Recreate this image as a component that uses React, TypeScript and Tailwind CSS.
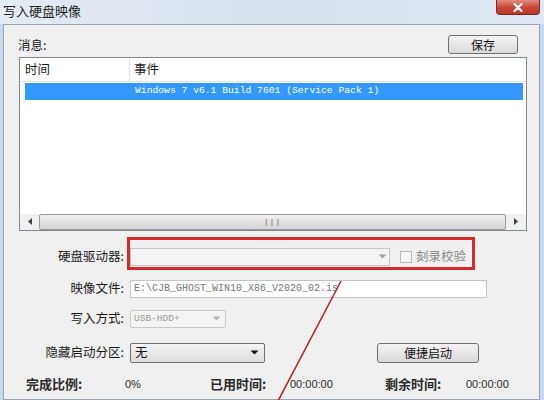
import React from "react";

const cjk = { fontFamily: '"Noto Sans CJK SC", "Liberation Sans", sans-serif' };
const mono = { fontFamily: '"Liberation Mono", "Noto Sans CJK SC", monospace' };
const sans = { fontFamily: '"Liberation Sans", sans-serif' };

function Caret({ color = "#a0a0a0" }: { color?: string }) {
  return (
    <svg width="9" height="5" viewBox="0 0 9 5">
      <path d="M0.5 0.5 L8.5 0.5 L4.5 4.5 Z" fill={color} />
    </svg>
  );
}

function Label({ text }: { text: string }) {
  return <div className="w-[121px] shrink-0 text-right pr-[1px] text-[12.5px] text-[#1a1a1a]">{text}</div>;
}

export default function App() {
  return (
    <div className="relative w-[544px] h-[400px] overflow-hidden bg-[#c6d9ee]" style={cjk}>
      {/* title bar */}
      <div className="flex items-start justify-between h-[24px] bg-gradient-to-r from-[#e4ecf5] via-[#d6e1ee] to-[#dde8f4]">
        <span className="pl-[3px] pt-[1px] text-[13px] text-[#222] leading-[20px]">写入硬盘映像</span>
        <div className="mr-[4px] w-[44px] h-[15px] rounded-b-[4px] border border-t-0 border-[#7a2a22] bg-gradient-to-b from-[#e08a7e] via-[#c9483a] to-[#b8382b] flex items-center justify-center">
          <svg width="10" height="9" viewBox="0 0 10 9">
            <path d="M1.5 1 L8.5 8 M8.5 1 L1.5 8" stroke="#fff" strokeWidth="2.2" strokeLinecap="round" />
          </svg>
        </div>
      </div>

      {/* client area */}
      <div className="ml-[3px] mr-[4px] h-[376px] border border-[#98a4b2] bg-[#f0f0f0]">
        <div className="flex items-center justify-between pt-[10px] pl-[14px] pr-[21px]">
          <span className="text-[12.5px] text-[#1a1a1a] pt-[1px]">消息:</span>
          <button className="w-[70px] h-[19px] rounded-[3px] border border-[#707070] bg-gradient-to-b from-[#f4f4f4] to-[#dadada] text-[12px] text-[#111] leading-none">
            保存
          </button>
        </div>

        {/* list */}
        <div className="ml-[15px] mt-[2px] w-[508px] h-[174px] border border-[#828790] bg-white flex flex-col">
          <div className="flex h-[24px] border-b border-[#e5e5e5] text-[12.5px] text-[#1a1a1a]">
            <div className="w-[110px] border-r border-[#e5e5e5] pl-[5px] flex items-center">时间</div>
            <div className="pl-[4px] flex items-center">事件</div>
          </div>
          <div className="ml-[5px] mr-[3px] mt-[1px] h-[17px] bg-[#3399ff] flex items-center pl-[110px] text-white text-[9.7px]" style={mono}>
            Windows 7 v6.1 Build 7601 (Service Pack 1)
          </div>
          <div className="flex-1" />
          <div className="flex h-[16px] bg-[#f0f0f0] items-stretch">
            <div className="w-[19px] flex items-center justify-center">
              <svg width="4" height="7" viewBox="0 0 4 7"><path d="M4 0 L0 3.5 L4 7 Z" fill="#404040" /></svg>
            </div>
            <div className="flex-1 rounded-[2px] border border-[#9a9a9a] bg-gradient-to-b from-[#f2f2f2] to-[#d4d4d4] flex items-center justify-center">
              <span className="text-[8px] text-[#555] tracking-[1px]" style={mono}>|||</span>
            </div>
            <div className="w-[20px] flex items-center justify-center">
              <svg width="4" height="7" viewBox="0 0 4 7"><path d="M0 0 L4 3.5 L0 7 Z" fill="#404040" /></svg>
            </div>
          </div>
        </div>

        {/* form */}
        <div className="mt-[17px] flex flex-col">
          <div className="flex items-center h-[18px]">
            <Label text="硬盘驱动器:" />
            <div className="ml-[5px] w-[260px] h-[18px] border border-[#c4c4c4] bg-[#f4f4f4] flex items-center justify-end pr-[2px]">
              <Caret />
            </div>
            <div className="ml-[10px] w-[12px] h-[12px] border border-[#b8b8b8] bg-[#f6f6f6]" />
            <span className="ml-[4px] text-[12.5px] text-[#8a8a8a]">刻录校验</span>
          </div>

          <div className="flex items-center h-[18px] mt-[14px]">
            <Label text="映像文件:" />
            <div className="ml-[5px] w-[357px] h-[18px] border border-[#c4c4c4] bg-white flex items-center pl-[3px] text-[10px] text-[#777]" style={mono}>
              E:\CJB_GHOST_WIN10_X86_V2020_02.is
            </div>
          </div>

          <div className="flex items-center h-[18px] mt-[12px]">
            <Label text="写入方式:" />
            <div className="ml-[5px] w-[96px] h-[18px] rounded-[2px] border border-[#c8c8c8] bg-[#f4f4f4] flex items-center justify-between pl-[3px] pr-[4px] text-[9.5px] text-[#9a9a9a]" style={mono}>
              USB-HDD+
              <Caret color="#b0b0b0" />
            </div>
          </div>

          <div className="flex items-center h-[20px] mt-[15px]">
            <Label text="隐藏启动分区:" />
            <div className="ml-[5px] w-[135px] h-[20px] rounded-[2px] border border-[#707070] bg-gradient-to-b from-[#f4f4f4] to-[#dedede] flex items-center justify-between pl-[4px] pr-[5px] text-[12.5px] text-[#111]">
              无
              <Caret color="#111" />
            </div>
            <button className="ml-[112px] w-[102px] h-[20px] rounded-[3px] border border-[#707070] bg-gradient-to-b from-[#f4f4f4] to-[#dadada] text-[12px] text-[#111] leading-none">
              便捷启动
            </button>
          </div>

          <div className="flex items-center h-[16px] mt-[13px] text-[13px] font-semibold text-[#2a2a2a]">
            <span className="ml-[22px] w-[99px]">完成比例:</span>
            <span className="w-[85px] text-[11px] font-normal" style={sans}>0%</span>
            <span className="w-[80px]">已用时间:</span>
            <span className="w-[95px] text-[11px] font-normal" style={sans}>00:00:00</span>
            <span className="w-[81px]">剩余时间:</span>
            <span className="text-[11px] font-normal" style={sans}>00:00:00</span>
          </div>
        </div>
      </div>

      {/* red annotation */}
      <div className="absolute left-[127px] top-[237px] w-[348px] h-[33px] border-[3px] border-[#d42a2a]" />
      <svg className="absolute left-0 top-0" width="544" height="400" viewBox="0 0 544 400">
        <line x1="341" y1="281" x2="278" y2="401" stroke="#b8262a" strokeWidth="1.6" />
      </svg>
    </div>
  );
}
